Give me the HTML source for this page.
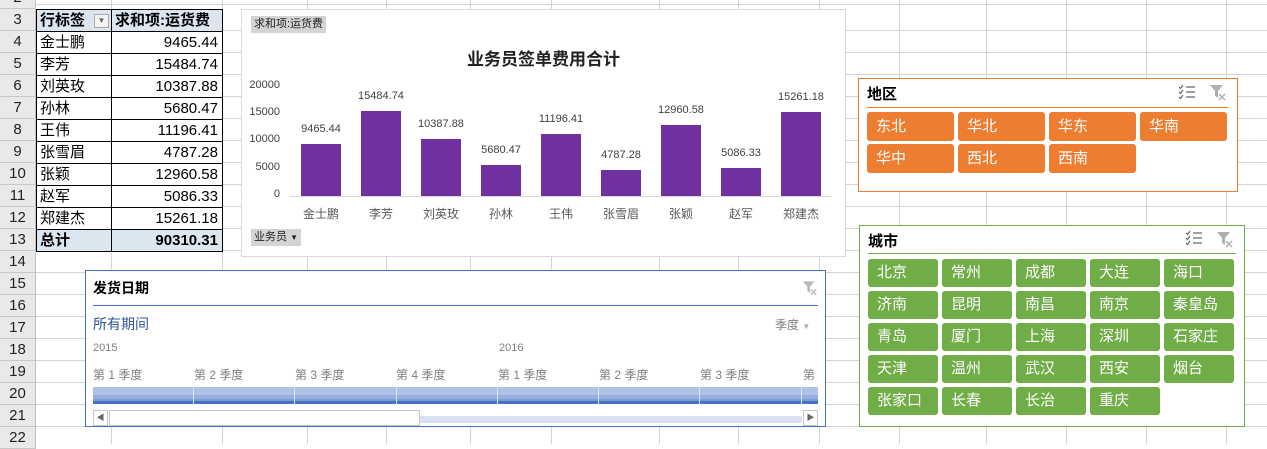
<!DOCTYPE html>
<html><head><meta charset="utf-8">
<style>
*{margin:0;padding:0;box-sizing:border-box}
body{width:1267px;height:444px;overflow:hidden;position:relative;background:#fff;font-family:"Liberation Sans","Noto Sans CJK SC",sans-serif;font-size:14px;color:#000}
.a{position:absolute}
.grid{position:absolute;left:0;top:0;width:1267px;height:444px;
background-image:repeating-linear-gradient(to bottom,transparent 0,transparent 21px,#d4d4d4 21px,#d4d4d4 22px);background-position:0 9px}
.vl{position:absolute;top:0;width:1px;height:444px;background:#d4d4d4}
.rh{position:absolute;left:0;width:36px;height:22px;text-align:center;line-height:21px;font-size:15px;color:#222;background:#e9e9e9;border-bottom:1px solid #c8c8c8;border-right:1px solid #c0c0c0}
.pt{position:absolute;height:23px;line-height:21px;font-size:15px;border:1px solid #000;background:#fff}
.v{text-align:right;padding-right:4px}
.n{padding-left:3px}
.hd{background:#dce6f1;font-weight:bold}
.lbl{position:absolute;font-size:11px;color:#404040;text-align:center;width:80px;margin-left:-40px}
.yl{position:absolute;font-size:11px;color:#404040;text-align:right;width:40px;left:240px}
.cat{position:absolute;font-size:12px;color:#595959;text-align:center;width:60px;top:205px}
.bar{position:absolute;width:40px;background:#7030a0}
.ob{position:absolute;height:29px;background:#ed7d31;color:#fff;border-radius:3px;font-size:15px;line-height:29px;padding-left:9px;width:87px}
.gb{position:absolute;height:28px;background:#70ad47;color:#fff;border-radius:3px;font-size:15px;line-height:28px;padding-left:9px;width:70px}
.q{position:absolute;top:366px;font-size:12px;color:#7f7f7f}
.tick{position:absolute;top:387px;width:1px;height:17px;background:#d8e2f3}
</style></head><body>
<div class="grid"></div>
<div class="vl" style="left:111px"></div><div class="vl" style="left:222px"></div>
<div class="vl" style="left:307px"></div><div class="vl" style="left:386px"></div>
<div class="vl" style="left:470px"></div><div class="vl" style="left:551px"></div>
<div class="vl" style="left:659px"></div><div class="vl" style="left:738px"></div>
<div class="vl" style="left:819px"></div><div class="vl" style="left:899px"></div>
<div class="vl" style="left:986px"></div><div class="vl" style="left:1066px"></div>
<div class="vl" style="left:1146px"></div><div class="vl" style="left:1226px"></div>

<div class="rh" style="top:-13px">2</div>
<div class="rh" style="top:9px">3</div><div class="rh" style="top:31px">4</div>
<div class="rh" style="top:53px">5</div><div class="rh" style="top:75px">6</div>
<div class="rh" style="top:97px">7</div><div class="rh" style="top:119px">8</div>
<div class="rh" style="top:141px">9</div><div class="rh" style="top:163px">10</div>
<div class="rh" style="top:185px">11</div><div class="rh" style="top:207px">12</div>
<div class="rh" style="top:229px">13</div><div class="rh" style="top:251px">14</div>
<div class="rh" style="top:273px">15</div><div class="rh" style="top:295px">16</div>
<div class="rh" style="top:317px">17</div><div class="rh" style="top:339px">18</div>
<div class="rh" style="top:361px">19</div><div class="rh" style="top:383px">20</div>
<div class="rh" style="top:405px">21</div><div class="rh" style="top:427px">22</div>

<!-- pivot table -->
<div class="pt hd n" style="left:36px;top:9px;width:76px">行标签<span class="a" style="left:57px;top:4px;width:15px;height:14px;border:1px solid #aaa;background:#f4f4f4;font-size:8px;line-height:12px;text-align:center;color:#666;font-weight:normal">▼</span></div>
<div class="pt hd n" style="left:111px;top:9px;width:112px">求和项:运货费</div>
<div class="pt n" style="left:36px;top:31px;width:76px">金士鹏</div><div class="pt v" style="left:111px;top:31px;width:112px">9465.44</div>
<div class="pt n" style="left:36px;top:53px;width:76px">李芳</div><div class="pt v" style="left:111px;top:53px;width:112px">15484.74</div>
<div class="pt n" style="left:36px;top:75px;width:76px">刘英玫</div><div class="pt v" style="left:111px;top:75px;width:112px">10387.88</div>
<div class="pt n" style="left:36px;top:97px;width:76px">孙林</div><div class="pt v" style="left:111px;top:97px;width:112px">5680.47</div>
<div class="pt n" style="left:36px;top:119px;width:76px">王伟</div><div class="pt v" style="left:111px;top:119px;width:112px">11196.41</div>
<div class="pt n" style="left:36px;top:141px;width:76px">张雪眉</div><div class="pt v" style="left:111px;top:141px;width:112px">4787.28</div>
<div class="pt n" style="left:36px;top:163px;width:76px">张颖</div><div class="pt v" style="left:111px;top:163px;width:112px">12960.58</div>
<div class="pt n" style="left:36px;top:185px;width:76px">赵军</div><div class="pt v" style="left:111px;top:185px;width:112px">5086.33</div>
<div class="pt n" style="left:36px;top:207px;width:76px">郑建杰</div><div class="pt v" style="left:111px;top:207px;width:112px">15261.18</div>
<div class="pt hd n" style="left:36px;top:229px;width:76px">总计</div><div class="pt hd v" style="left:111px;top:229px;width:112px">90310.31</div>

<!-- chart -->
<div class="a" style="left:241px;top:9px;width:605px;height:248px;background:#fff;border:1px solid #d9d9d9"></div>
<div class="a" style="left:251px;top:16px;height:17px;padding:0 3px;background:#d4d4d4;font-size:11px;line-height:17px;color:#222">求和项:运货费</div>
<div class="a" style="left:241px;top:45px;width:605px;text-align:center;font-size:17px;font-weight:bold;color:#222">业务员签单费用合计</div>
<div class="yl" style="top:79px">20000</div><div class="yl" style="top:106px">15000</div>
<div class="yl" style="top:133px">10000</div><div class="yl" style="top:161px">5000</div>
<div class="yl" style="top:188px">0</div>
<div class="a" style="left:290px;top:196px;width:541px;height:1px;background:#d9d9d9"></div>
<div class="bar" style="left:301px;top:144px;height:52px"></div>
<div class="bar" style="left:361px;top:111px;height:85px"></div>
<div class="bar" style="left:421px;top:139px;height:57px"></div>
<div class="bar" style="left:481px;top:165px;height:31px"></div>
<div class="bar" style="left:541px;top:134px;height:62px"></div>
<div class="bar" style="left:601px;top:170px;height:26px"></div>
<div class="bar" style="left:661px;top:125px;height:71px"></div>
<div class="bar" style="left:721px;top:168px;height:28px"></div>
<div class="bar" style="left:781px;top:112px;height:84px"></div>
<div class="lbl" style="left:321px;top:123px">9465.44</div>
<div class="lbl" style="left:381px;top:90px">15484.74</div>
<div class="lbl" style="left:441px;top:118px">10387.88</div>
<div class="lbl" style="left:501px;top:144px">5680.47</div>
<div class="lbl" style="left:561px;top:113px">11196.41</div>
<div class="lbl" style="left:621px;top:149px">4787.28</div>
<div class="lbl" style="left:681px;top:104px">12960.58</div>
<div class="lbl" style="left:741px;top:147px">5086.33</div>
<div class="lbl" style="left:801px;top:91px">15261.18</div>
<div class="cat" style="left:291px">金士鹏</div><div class="cat" style="left:351px">李芳</div>
<div class="cat" style="left:411px">刘英玫</div><div class="cat" style="left:471px">孙林</div>
<div class="cat" style="left:531px">王伟</div><div class="cat" style="left:591px">张雪眉</div>
<div class="cat" style="left:651px">张颖</div><div class="cat" style="left:711px">赵军</div>
<div class="cat" style="left:771px">郑建杰</div>
<div class="a" style="left:251px;top:229px;height:17px;padding:0 3px;background:#d4d4d4;font-size:11px;line-height:17px;color:#222">业务员 <span style="font-size:8px">▼</span></div>

<!-- 地区 slicer -->
<div class="a" style="left:858px;top:78px;width:380px;height:114px;background:#fff;border:1px solid #ed7d31"></div>
<div class="a" style="left:867px;top:83px;font-size:15px;font-weight:bold">地区</div>
<svg class="a" style="left:1178px;top:84px" width="18" height="16" viewBox="0 0 18 16"><path d="M1 3l1.5 1.5L5 1M1 8l1.5 1.5L5 6M1 13l1.5 1.5L5 11" stroke="#666" fill="none" stroke-width="1.2"/><path d="M8 3h9M8 8h9M8 13h9" stroke="#666" stroke-width="1.3"/></svg>
<svg class="a" style="left:1209px;top:84px" width="18" height="17" viewBox="0 0 18 17"><path d="M1 1h13l-5 6v7l-3-2V7z" fill="#b0b0b0"/><path d="M10 10l6 6M16 10l-6 6" stroke="#b0b0b0" stroke-width="1.5"/></svg>
<div class="a" style="left:867px;top:107px;width:361px;height:1px;background:#ed7d31"></div>
<div class="ob" style="left:867px;top:112px">东北</div><div class="ob" style="left:958px;top:112px">华北</div>
<div class="ob" style="left:1049px;top:112px">华东</div><div class="ob" style="left:1140px;top:112px">华南</div>
<div class="ob" style="left:867px;top:144px">华中</div><div class="ob" style="left:958px;top:144px">西北</div>
<div class="ob" style="left:1049px;top:144px">西南</div>

<!-- 城市 slicer -->
<div class="a" style="left:859px;top:225px;width:386px;height:202px;background:#fff;border:1px solid #70ad47"></div>
<div class="a" style="left:868px;top:230px;font-size:15px;font-weight:bold">城市</div>
<svg class="a" style="left:1185px;top:230px" width="18" height="16" viewBox="0 0 18 16"><path d="M1 3l1.5 1.5L5 1M1 8l1.5 1.5L5 6M1 13l1.5 1.5L5 11" stroke="#666" fill="none" stroke-width="1.2"/><path d="M8 3h9M8 8h9M8 13h9" stroke="#666" stroke-width="1.3"/></svg>
<svg class="a" style="left:1216px;top:231px" width="18" height="17" viewBox="0 0 18 17"><path d="M1 1h13l-5 6v7l-3-2V7z" fill="#b0b0b0"/><path d="M10 10l6 6M16 10l-6 6" stroke="#b0b0b0" stroke-width="1.5"/></svg>
<div class="a" style="left:868px;top:253px;width:368px;height:1px;background:#70ad47"></div>
<div class="gb" style="left:868px;top:259px">北京</div><div class="gb" style="left:942px;top:259px">常州</div><div class="gb" style="left:1016px;top:259px">成都</div><div class="gb" style="left:1090px;top:259px">大连</div><div class="gb" style="left:1164px;top:259px">海口</div>
<div class="gb" style="left:868px;top:291px">济南</div><div class="gb" style="left:942px;top:291px">昆明</div><div class="gb" style="left:1016px;top:291px">南昌</div><div class="gb" style="left:1090px;top:291px">南京</div><div class="gb" style="left:1164px;top:291px">秦皇岛</div>
<div class="gb" style="left:868px;top:323px">青岛</div><div class="gb" style="left:942px;top:323px">厦门</div><div class="gb" style="left:1016px;top:323px">上海</div><div class="gb" style="left:1090px;top:323px">深圳</div><div class="gb" style="left:1164px;top:323px">石家庄</div>
<div class="gb" style="left:868px;top:355px">天津</div><div class="gb" style="left:942px;top:355px">温州</div><div class="gb" style="left:1016px;top:355px">武汉</div><div class="gb" style="left:1090px;top:355px">西安</div><div class="gb" style="left:1164px;top:355px">烟台</div>
<div class="gb" style="left:868px;top:387px">张家口</div><div class="gb" style="left:942px;top:387px">长春</div><div class="gb" style="left:1016px;top:387px">长治</div><div class="gb" style="left:1090px;top:387px">重庆</div>

<!-- timeline -->
<div class="a" style="left:85px;top:270px;width:741px;height:157px;background:#fff;border:1px solid #4472c4"></div>
<div class="a" style="left:93px;top:278px;font-size:14px;font-weight:bold">发货日期</div>
<svg class="a" style="left:802px;top:280px" width="16" height="16" viewBox="0 0 18 17"><path d="M1 1h13l-5 6v7l-3-2V7z" fill="#b8b8b8"/><path d="M10 10l6 6M16 10l-6 6" stroke="#b8b8b8" stroke-width="1.5"/></svg>
<div class="a" style="left:93px;top:305px;width:725px;height:1px;background:#4472c4"></div>
<div class="a" style="left:93px;top:314px;font-size:14px;color:#2f5597">所有期间</div>
<div class="a" style="left:775px;top:316px;font-size:12px;color:#7f7f7f">季度 <span style="font-size:8px;color:#aaa">▼</span></div>
<div class="a" style="left:93px;top:342px;font-size:11px;color:#7f7f7f">2015</div>
<div class="a" style="left:499px;top:342px;font-size:11px;color:#7f7f7f">2016</div>
<div class="q" style="left:93px">第 1 季度</div><div class="q" style="left:194px">第 2 季度</div>
<div class="q" style="left:295px">第 3 季度</div><div class="q" style="left:396px">第 4 季度</div>
<div class="q" style="left:498px">第 1 季度</div><div class="q" style="left:599px">第 2 季度</div>
<div class="q" style="left:700px">第 3 季度</div><div class="q" style="left:803px;width:15px;overflow:hidden;white-space:nowrap">第 4 季度</div>
<div class="a" style="left:93px;top:387px;width:725px;height:17px;background:linear-gradient(to bottom,#aec2e6 0,#aec2e6 8px,#95afdf 8px,#95afdf 12px,#7d9ad6 12px,#7d9ad6 14px,#4472c4 14px)"></div>
<div class="tick" style="left:193px"></div><div class="tick" style="left:294px"></div><div class="tick" style="left:396px"></div>
<div class="tick" style="left:497px"></div><div class="tick" style="left:598px"></div><div class="tick" style="left:699px"></div><div class="tick" style="left:801px"></div>
<div class="a" style="left:93px;top:410px;width:725px;height:16px;background:#fff"></div>
<div class="a" style="left:419px;top:416px;width:383px;height:7px;background:#d9e2f3"></div>
<div class="a" style="left:93px;top:410px;width:15px;height:16px;border:1px solid #c6c6c6;font-size:8px;line-height:14px;text-align:center;color:#666">◀</div>
<div class="a" style="left:109px;top:410px;width:311px;height:16px;border:1px solid #c6c6c6;background:#fff"></div>
<div class="a" style="left:803px;top:410px;width:15px;height:16px;border:1px solid #c6c6c6;font-size:8px;line-height:14px;text-align:center;color:#666">▶</div>
</body></html>
